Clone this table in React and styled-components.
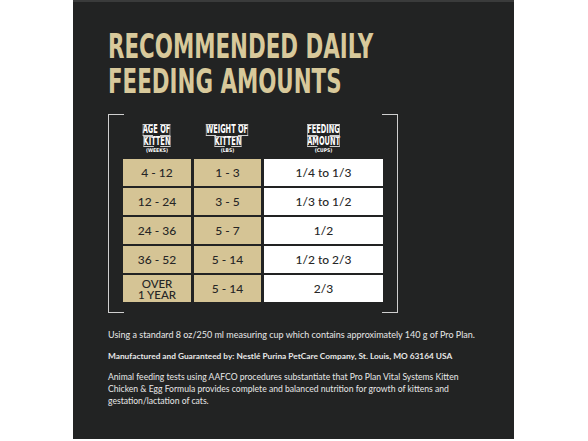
import React from 'react';
import styled, { createGlobalStyle } from 'styled-components';

const Global = createGlobalStyle`
    body {
        margin: 0;
        background: #ffffff;
        font-family: "Liberation Sans", Arial, sans-serif;
    }
`;

const rows = [
    { age: '4 - 12', weight: '1 - 3', cups: '1/4 to 1/3' },
    { age: '12 - 24', weight: '3 - 5', cups: '1/3 to 1/2' },
    { age: '24 - 36', weight: '5 - 7', cups: '1/2' },
    { age: '36 - 52', weight: '5 - 14', cups: '1/2 to 2/3' },
    { age: ['OVER', '1 YEAR'], weight: '5 - 14', cups: '2/3' },
];

const headers = [
    { top: 'AGE OF', bottom: 'KITTEN', unit: '(WEEKS)' },
    { top: 'WEIGHT OF', bottom: 'KITTEN', unit: '(LBS)' },
    { top: 'FEEDING', bottom: 'AMOUNT', unit: '(CUPS)' },
];

const App = () => {
    return (
        <>
        <Global />
        <Panel>
            <Titulo>
                <Linea>RECOMMENDED DAILY</Linea>
                <Linea>FEEDING AMOUNTS</Linea>
            </Titulo>
            <Bracket>
                <Grid>
                    {headers.map(h => (
                        <Head key={h.top}>
                            <HeadLine>{h.top}</HeadLine>
                            <HeadLine>{h.bottom}</HeadLine>
                            <Unit>{h.unit}</Unit>
                        </Head>
                    ))}
                    {rows.map((r, i) => (
                        <React.Fragment key={i}>
                            <Cell gold>
                                {Array.isArray(r.age) ? <Two>{r.age[0]}<br />{r.age[1]}</Two> : r.age}
                            </Cell>
                            <Cell gold>{r.weight}</Cell>
                            <Cell>{r.cups}</Cell>
                        </React.Fragment>
                    ))}
                </Grid>
            </Bracket>
            <Nota nowrap>Using a standard 8 oz/250 ml measuring cup which contains approximately 140 g of Pro Plan.</Nota>
            <Nota nowrap bold>Manufactured and Guaranteed by: Nestlé Purina PetCare Company, St. Louis, MO 63164 USA</Nota>
            <Nota small>Animal feeding tests using AAFCO procedures substantiate that Pro Plan Vital Systems Kitten Chicken &amp; Egg Formula provides complete and balanced nutrition for growth of kittens and gestation/lactation of cats.</Nota>
        </Panel>
        </>
    );
}

export default App;

const Panel = styled.div`
    margin-left: 73px;
    width: 441px;
    height: 439px;
    background: #222323;
    border-top: 2px solid #3a3b3b;
    padding: 0 0 0 35px;
    box-sizing: border-box;
    overflow: hidden;
`;
const Titulo = styled.h1`
    margin: 27px 0 0 0;
    font-family: "DejaVu Sans Condensed", "Liberation Sans", sans-serif;
    font-weight: 700;
    font-size: 33px;
    line-height: 35px;
    color: #d8c99b;
`;
const Linea = styled.span`
    display: block;
    white-space: nowrap;
    transform: scaleX(0.72);
    transform-origin: left center;
`;
const Bracket = styled.div`
    position: relative;
    margin-top: 15px;
    width: 290px;
    padding: 0 15px 11px 15px;
    box-sizing: border-box;

    ::before, ::after {
        content: '';
        position: absolute;
        top: 0;
        bottom: 0;
        width: 16px;
        border: 1.5px solid #cfcfcf;
        box-sizing: border-box;
    }
    ::before {
        left: 0;
        border-right: none;
    }
    ::after {
        right: 0;
        border-left: none;
    }
`;
const Grid = styled.div`
    display: grid;
    grid-template-columns: 68px 67px 119px;
    grid-template-rows: 43px;
    grid-auto-rows: 27px;
    column-gap: 3px;
    row-gap: 2px;
`;
const Head = styled.div`
    display: flex;
    flex-direction: column;
    align-items: center;
    justify-content: flex-end;
    padding-bottom: 4px;
    color: #ffffff;
    font-family: "DejaVu Sans Condensed", "Liberation Sans", sans-serif;
    font-weight: 700;
`;
const HeadLine = styled.span`
    display: block;
    white-space: nowrap;
    font-size: 11.5px;
    line-height: 11.5px;
    transform: scaleX(0.64);
`;
const Unit = styled.span`
    display: block;
    font-size: 5px;
    line-height: 6px;
`;
const Cell = styled.div`
    display: flex;
    align-items: center;
    justify-content: center;
    background: ${p => p.gold ? '#d5c495' : '#ffffff'};
    color: #262626;
    font-family: Lato, "Noto Sans", sans-serif;
    font-weight: 500;
    font-size: 12px;
    text-align: center;
`;
const Two = styled.div`
    font-size: 11.5px;
    line-height: 11px;
`;
const Nota = styled.p`
    width: 360px;
    margin: 16px 0 0 0;
    color: #e8e8e8;
    font-family: Lato, "Noto Sans", sans-serif;
    font-weight: ${p => p.bold ? 700 : 400};
    font-size: ${p => p.bold ? '8.3px' : p.small ? '8.6px' : '9px'};
    line-height: 12px;
    white-space: ${p => p.nowrap ? 'nowrap' : 'normal'};
    & + & { margin-top: 9px; }
`;
